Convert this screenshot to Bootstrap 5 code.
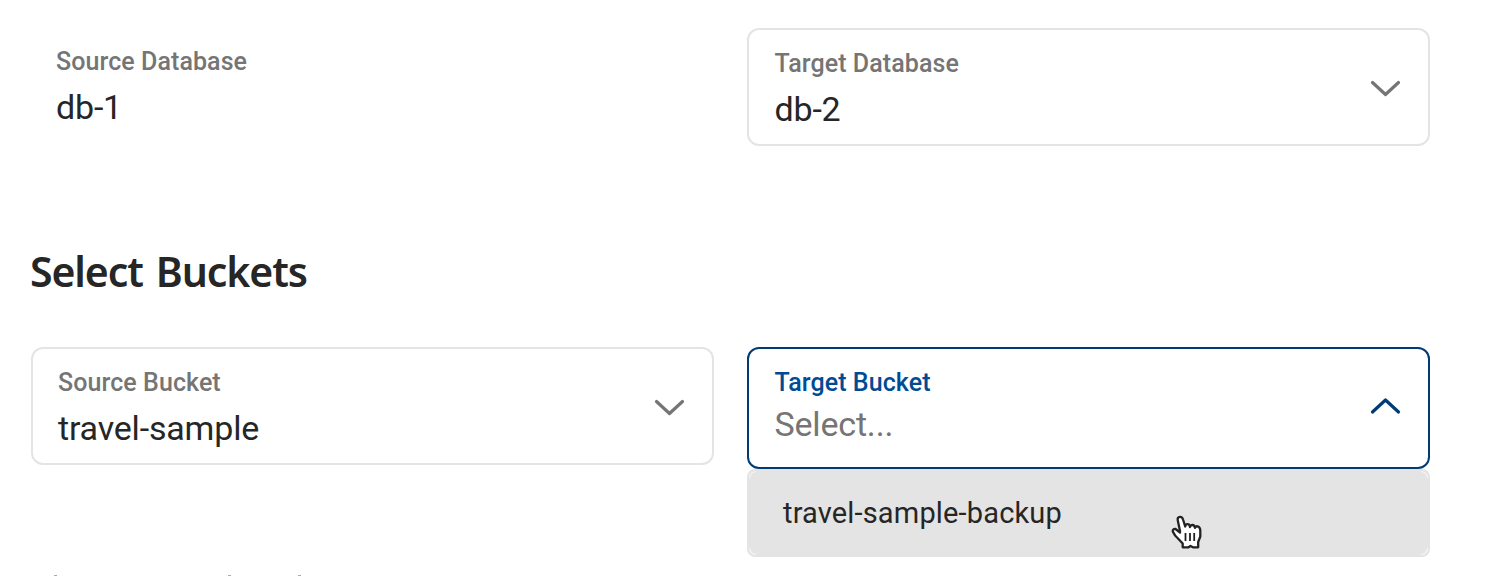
<!DOCTYPE html>
<html lang="en">
<head>
<meta charset="utf-8">
<meta name="viewport" content="width=device-width, initial-scale=1">
<title>Select Buckets</title>
<link rel="stylesheet" href="https://cdn.jsdelivr.net/npm/bootstrap@5.3.0/dist/css/bootstrap.min.css">
<style>
body { font-family: Roboto, "Liberation Sans", sans-serif; color: #262626; background: #fff; height: 576px; overflow: hidden; }
.form-area { padding: 28px 55px 0 31px; }
.pair { display: grid; grid-template-columns: 683px 683px; column-gap: 33px; align-items: start; }
.field { height: 118px; padding: 20px 27px 0 25px; border: 2px solid #e4e4e4; border-radius: 12px; }
.field.right { padding-left: 25.5px; }
.field.plain { border-color: transparent; padding: 18px 23px 0; }
.field.open { height: 122px; border-color: #003b75; }
.lbl { font-size: 25px; line-height: 28px; font-weight: 500; letter-spacing: .08px; color: #757575; }
.open .lbl { color: #004c94; }
.val { font-size: 34px; line-height: 40px; margin-top: 11px; letter-spacing: -.18px; }
.open .val { color: #757575; margin-top: 7px; }
.chev { width: 32px; height: 20px; margin-top: 28px; fill: none; stroke: #757575; stroke-width: 3.2; stroke-linecap: round; stroke-linejoin: round; }
.open .chev { stroke: #003b75; }
h2.title { font-family: "Noto Sans", sans-serif; font-weight: 600; font-size: 41px; line-height: 50px; margin: 100px 0 51px -1px; letter-spacing: -1.1px; word-spacing: 3.5px; }
.option { height: 88px; padding: 27px 36px 0; font-size: 29px; line-height: 35px; letter-spacing: .16px; background: #e4e4e4; border-radius: 8px; }
.corner-lines { left: 0; top: 0; width: 683px; height: 88px; fill: none; stroke: #f5f5f5; stroke-width: 1.2; }
.pointer-icon { left: 424px; top: 46px; width: 32px; height: 36px; }
.next-line { left: 0; bottom: 0; width: 100%; height: 1px; }
</style>
</head>
<body class="position-relative">
<main class="form-area">
  <div class="pair">
    <div class="field plain"><div class="lbl">Source Database</div><div class="val">db-1</div></div>
    <div class="field right d-flex justify-content-between">
      <div><div class="lbl">Target Database</div><div class="val">db-2</div></div>
      <svg class="chev" viewBox="0 0 32 20"><path d="M3.5 4.5 16.5 16.5 29.5 4.5"/></svg>
    </div>
  </div>
  <h2 class="title">Select Buckets</h2>
  <div class="pair">
    <div class="field d-flex justify-content-between">
      <div><div class="lbl">Source Bucket</div><div class="val">travel-sample</div></div>
      <svg class="chev" viewBox="0 0 32 20"><path d="M3.5 4.5 16.5 16.5 29.5 4.5"/></svg>
    </div>
    <div>
      <div class="field right open d-flex justify-content-between">
        <div><div class="lbl">Target Bucket</div><div class="val">Select...</div></div>
        <svg class="chev" viewBox="0 0 32 20"><path d="M3.5 15 16.5 3 29.5 15"/></svg>
      </div>
      <div class="option position-relative">
        <svg class="corner-lines position-absolute" viewBox="0 0 683 88"><path d="M2.5 9Q3 3 9 2.5M674 2.5Q680 3 680.5 9M2.5 79Q3 85 9 85.5M674 85.5Q680 85 680.5 79"/></svg>
        <span>travel-sample-backup</span>
        <svg class="pointer-icon position-absolute" viewBox="0 0 32 36">
          <path d="M9 16 6.8 5.5Q6 2 9 1.8Q11.3 1.6 12.2 5L14.2 11.5Q14.5 9 16.8 9.2Q18.6 9.3 19 12Q19.6 9.8 21.5 10Q23.5 10.2 24 12.8Q24.6 11 26.5 11.3Q29.2 11.8 29.3 15.5V21.5L27.2 27V32.3H22L19.5 31 17.5 32.3H11.7V28.5L7 23.5Q3.5 20.5 1.8 16.5Q1.4 13.8 4.5 14L9 17.5Z" fill="#fff" stroke="#222" stroke-width="2.3" stroke-linejoin="round"/>
          <path d="M14.5 18v8M19 18v8M23.2 18v8" stroke="#222" stroke-width="1.8"/>
        </svg>
      </div>
    </div>
  </div>
</main>
<svg class="next-line position-absolute" viewBox="0 0 1485 1" preserveAspectRatio="none"><path d="M54 0h3v1h-3zM228 0h3v1h-3zM298 0h3v1h-3z" fill="#aaa"/></svg>
<script src="https://cdn.jsdelivr.net/npm/bootstrap@5.3.0/dist/js/bootstrap.bundle.min.js"></script>
</body>
</html>
